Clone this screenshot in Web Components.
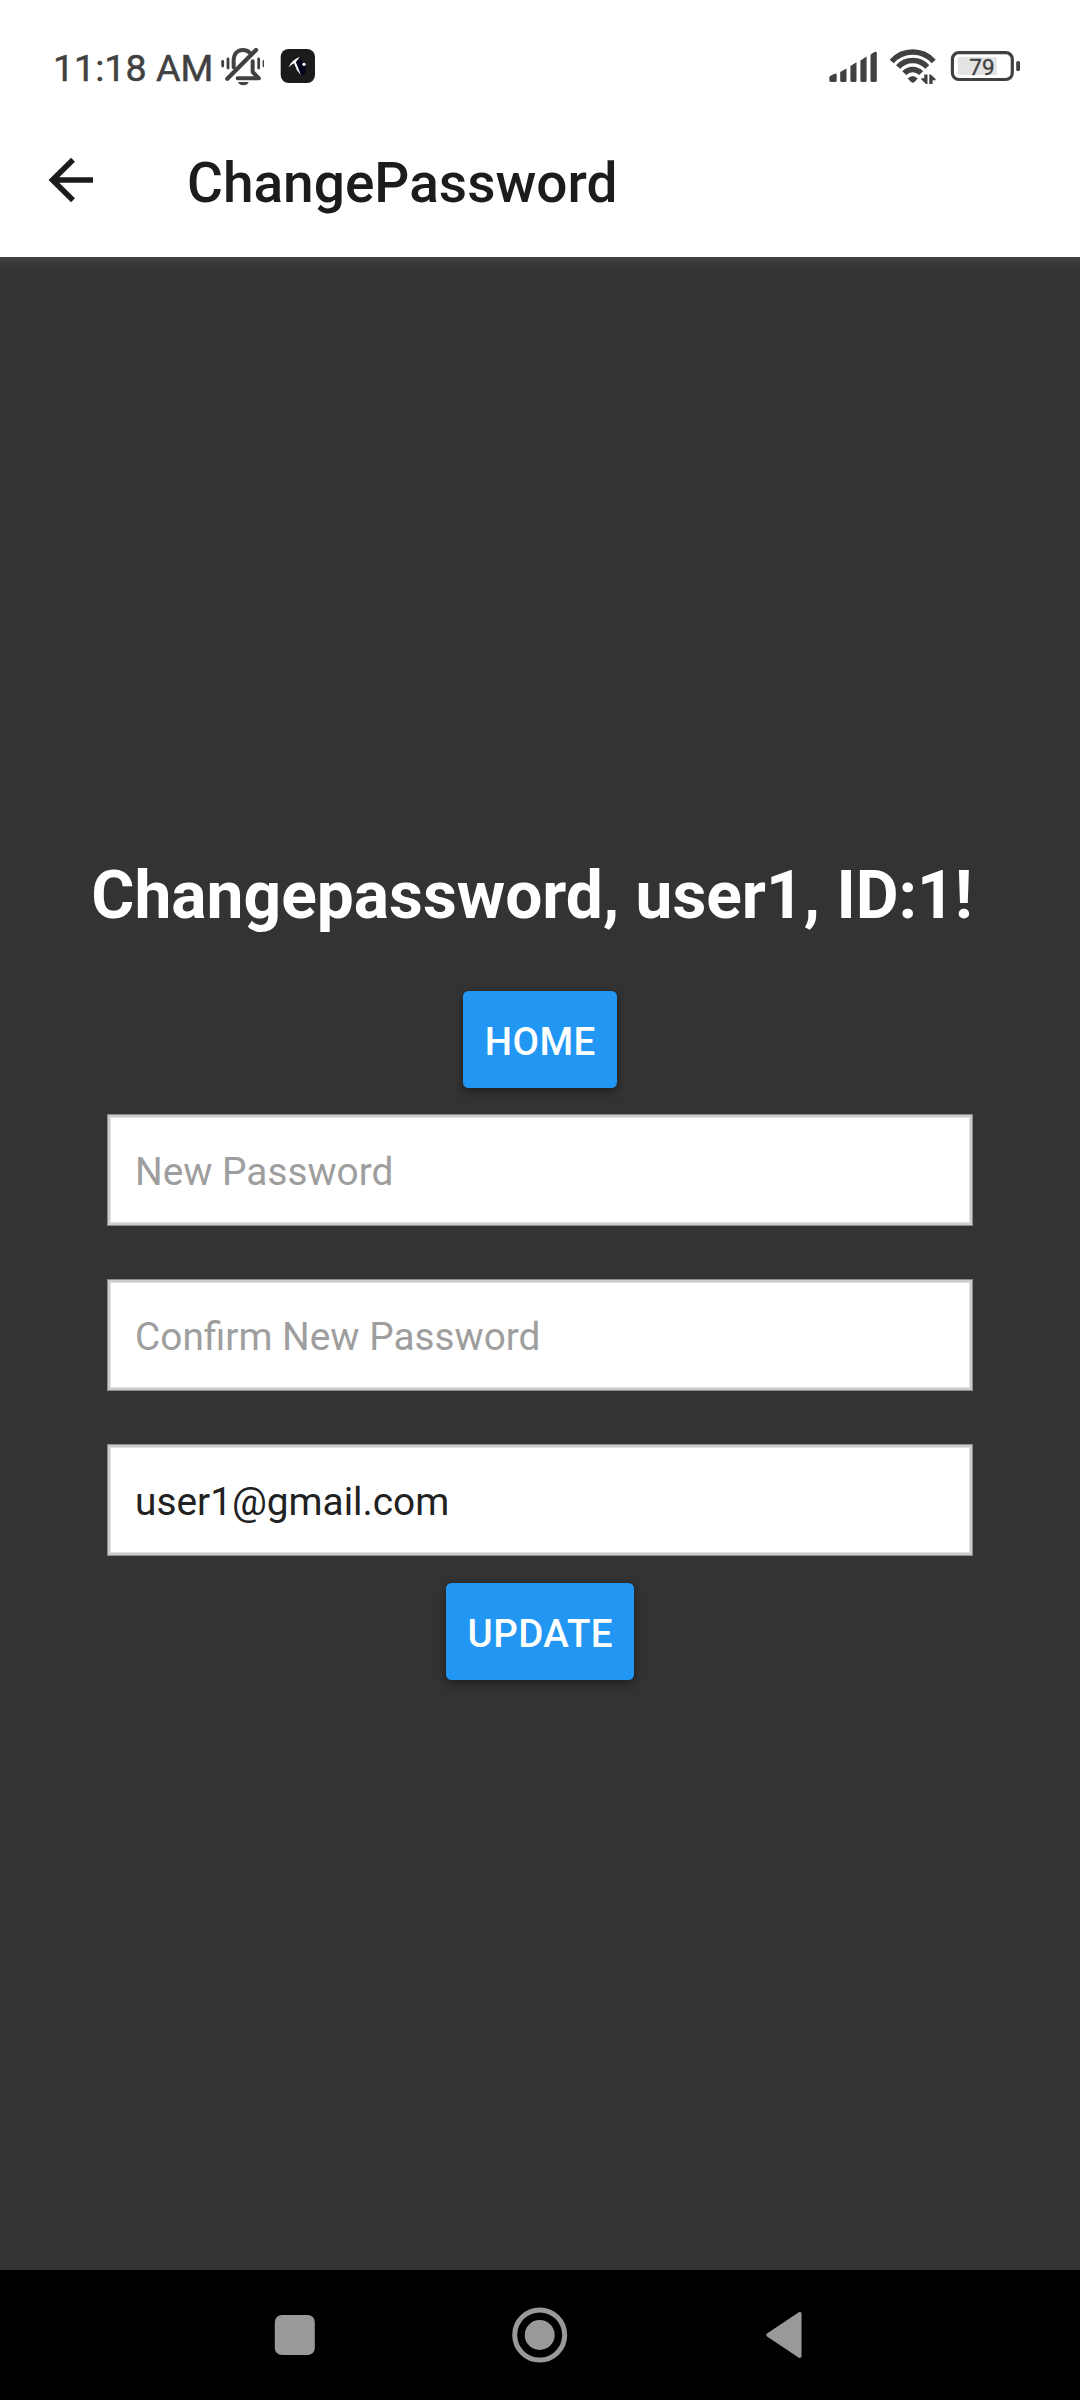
<!DOCTYPE html>
<html lang="en">
<head>
<meta charset="utf-8">
<title>ChangePassword</title>
<style>
html,body{margin:0;padding:0}
body{width:1080px;height:2400px;overflow:hidden;background:#333;font-family:Roboto,"Noto Sans",sans-serif}
</style>
</head>
<body>
<app-screen>
  <status-bar slot="top" time="11:18 AM" level="79"></status-bar>
  <app-header slot="top">ChangePassword</app-header>
  <screen-title>Changepassword, user1, ID:1!</screen-title>
  <raised-button style="margin-top:54px">HOME</raised-button>
  <text-field style="margin-top:26px" hint="New Password"></text-field>
  <text-field style="margin-top:53px" hint="Confirm New Password"></text-field>
  <text-field style="margin-top:53px" value="user1@gmail.com"></text-field>
  <raised-button style="margin-top:27px">UPDATE</raised-button>
  <nav-bar slot="bottom"></nav-bar>
</app-screen>
<script>
function define(name, render) {
  customElements.define(name, class extends HTMLElement {
    constructor() {
      super();
      this.attachShadow({ mode: 'open' });
    }
    connectedCallback() {
      this.shadowRoot.innerHTML = render(this);
    }
  });
}

define('app-screen', () => `
<style>
:host{display:flex;flex-direction:column;width:1080px;height:2400px;background:#333}
main{flex:1;display:flex;flex-direction:column;align-items:center;box-sizing:border-box;padding-top:597px;
  background:linear-gradient(#424342 0,#3b3c3b 4px,#363636 10px,#333 17px)}
</style>
<slot name="top"></slot><main><slot></slot></main><slot name="bottom"></slot>`);

define('status-bar', el => `
<style>
:host{display:flex;align-items:flex-start;height:130px;background:#fff;color:#414141;box-sizing:border-box;padding:44px 60px 0 53px}
.time{font-size:37.6px;line-height:44px;width:163px;margin-top:2px;white-space:nowrap;-webkit-text-stroke:.5px #414141}
svg{display:block;flex:none}
.app{margin-left:14px}
.net{margin-left:auto}
text{font:22.5px Roboto,sans-serif;fill:#414141;stroke:#414141;stroke-width:.3px}
</style>
<span class="time">${el.getAttribute('time')}</span>
<svg width="48" height="44" viewBox="527 42 144 132" fill="none" stroke="#414141" stroke-linecap="round" stroke-linejoin="round">
  <path d="M580 112V92C580 71 592 60 608 60C618 60 625 64 630 70" stroke-width="12"/>
  <path d="M592 145H656L637 126V94" stroke-width="12"/>
  <path d="M561 146L647 60" stroke-width="13"/>
  <path d="M593 156H625Q621 166 609 166Q597 166 593 156Z" fill="#414141" stroke="none"/>
  <path d="M547 94V108M563 87V114M655 87V114M671 94V108" stroke-width="8.5"/>
</svg>
<svg class="app" width="40" height="44" viewBox="0 0 40 44">
  <rect x="2.7" y="5" width="34.3" height="34" rx="8" fill="#1b1b1b"/>
  <path d="M19 16L23 13.500L24 18L28 22L27 30L22 32L20 27L17 22Z" fill="#03031c"/>
  <path d="M10.500 23.500Q13 16.500 22 12.800L17.800 18Q20.500 24.500 23 31.500Q18 26 16 19.200Q13 20.500 10.500 23.500Z" fill="#fff"/>
  <circle cx="26" cy="20.300" r="1.600" fill="#fff"/>
</svg>
<svg class="net" width="196" height="44" viewBox="824 44 196 44">
  <g fill="#414141">
    <path d="M829.3 80V77Q830 75.5 833 74.5L835 73.7Q836.7 73.3 836.7 75V80.500Q836.700 82 835 82H831Q829.3 82 829.3 80Z"/>
    <path d="M840.2 72L846.5 68.5V80.500Q846.500 82 845 82H842Q840.200 82 840.200 80.500Z"/>
    <path d="M850.4 66L856.500 62.300V80.500Q856.500 82 855 82H852Q850.400 82 850.400 80.500Z"/>
    <path d="M860.400 60.500L866.600 56.500V80.500Q866.600 82 865 82H862Q860.400 82 860.400 80.500Z"/>
    <path d="M870.500 55Q872 53 875 51.800Q876.800 51.300 876.800 53V80.500Q876.800 82 875 82H872Q870.500 82 870.500 80.500Z"/>
    <path d="M907.700 78.500Q912.700 73.500 917.700 78.500L914.500 82Q912.700 83.600 911 82Z"/>
    <path d="M924.200 74.500H927.500V84H926L921.300 79.500V78.300H924.200ZM929.300 84V74.500H930.800L935.600 79V80.200H932.600V84Z"/>
    <rect x="1016.200" y="61" width="3.800" height="10" rx="1.600"/>
  </g>
  <g fill="none" stroke="#414141" stroke-width="5.500">
    <path d="M891.700 61.500A28 28 0 0 1 933.700 61.500"/>
    <path d="M898.100 67A19.700 19.700 0 0 1 927.300 67"/>
    <path d="M904.300 73.200A11.300 11.300 0 0 1 921.100 73.200"/>
  </g>
  <rect x="952.400" y="52.600" width="59.900" height="26.900" rx="6.500" fill="none" stroke="#414141" stroke-width="3.200"/>
  <path d="M960 57H996.700V75H960Q957.700 75 957.700 72.700V59.300Q957.700 57 960 57Z" fill="#e3e3e3"/>
  <text x="969.300" y="74.700">${el.getAttribute('level')}</text>
</svg>`);

define('app-header', () => `
<style>
:host{display:flex;align-items:flex-start;height:127px;background:#fff;color:#1c1c1e;padding-left:44px;box-sizing:border-box}
svg{display:block;margin-top:22px;flex:none}
h1{margin:17px 0 0 89px;font-size:55px;font-weight:500;line-height:72px}
</style>
<svg width="54" height="56" viewBox="44 152 54 56" fill="none" stroke="#1c1c1e" stroke-width="5.500">
  <path d="M93 180H52M73 159.800L52.500 180L73 200.200"/>
</svg>
<h1><slot></slot></h1>`);

define('screen-title', () => `
<style>
:host{display:block;color:#fff;font-size:65.900px;font-weight:700;line-height:83px;white-space:nowrap;margin-right:16px}
</style><slot></slot>`);

define('raised-button', () => `
<style>
:host{display:block}
button{display:block;box-sizing:border-box;height:97px;border:0;margin:0;padding:3px 21.500px 0 22px;border-radius:5.500px;background:#2196f3;color:#fff;
  font:500 38.500px/45px Roboto,sans-serif;letter-spacing:.4px;box-shadow:0 5px 11px rgba(0,0,0,.28),0 1px 4px rgba(0,0,0,.2)}
</style><button><slot></slot></button>`);

define('text-field', el => {
  const value = el.getAttribute('value');
  return `
<style>
:host{display:block;width:866px}
.box{box-sizing:border-box;height:112px;border:1px solid #8c8c8c;box-shadow:inset 0 0 0 2px #ccc,inset 0 0 0 3px #e2e2e2;
  background:#fff;padding:2px 27px 0;display:flex;align-items:center;font-size:38.800px;line-height:45px;color:#212121}
.hint{color:#9e9e9e}
</style>
<div class="box"><span class="${value ? '' : 'hint'}">${value || el.getAttribute('hint')}</span></div>`;
});

define('nav-bar', () => `
<style>
:host{display:flex;justify-content:center;align-items:center;gap:189px;height:130px;background:#000}
svg{display:block}
</style>
<svg width="56" height="56" fill="#999"><rect x="7.800" y="8" width="40" height="40" rx="7"/></svg>
<svg width="56" height="56"><circle cx="27.700" cy="28" r="25" fill="none" stroke="#999" stroke-width="5"/><circle cx="27.700" cy="28" r="15" fill="#999"/></svg>
<svg width="56" height="56"><path d="M11 28L42.800 6.700V49.300Z" fill="#999" stroke="#999" stroke-width="3.500" stroke-linejoin="round"/></svg>`);
</script>
</body>
</html>
